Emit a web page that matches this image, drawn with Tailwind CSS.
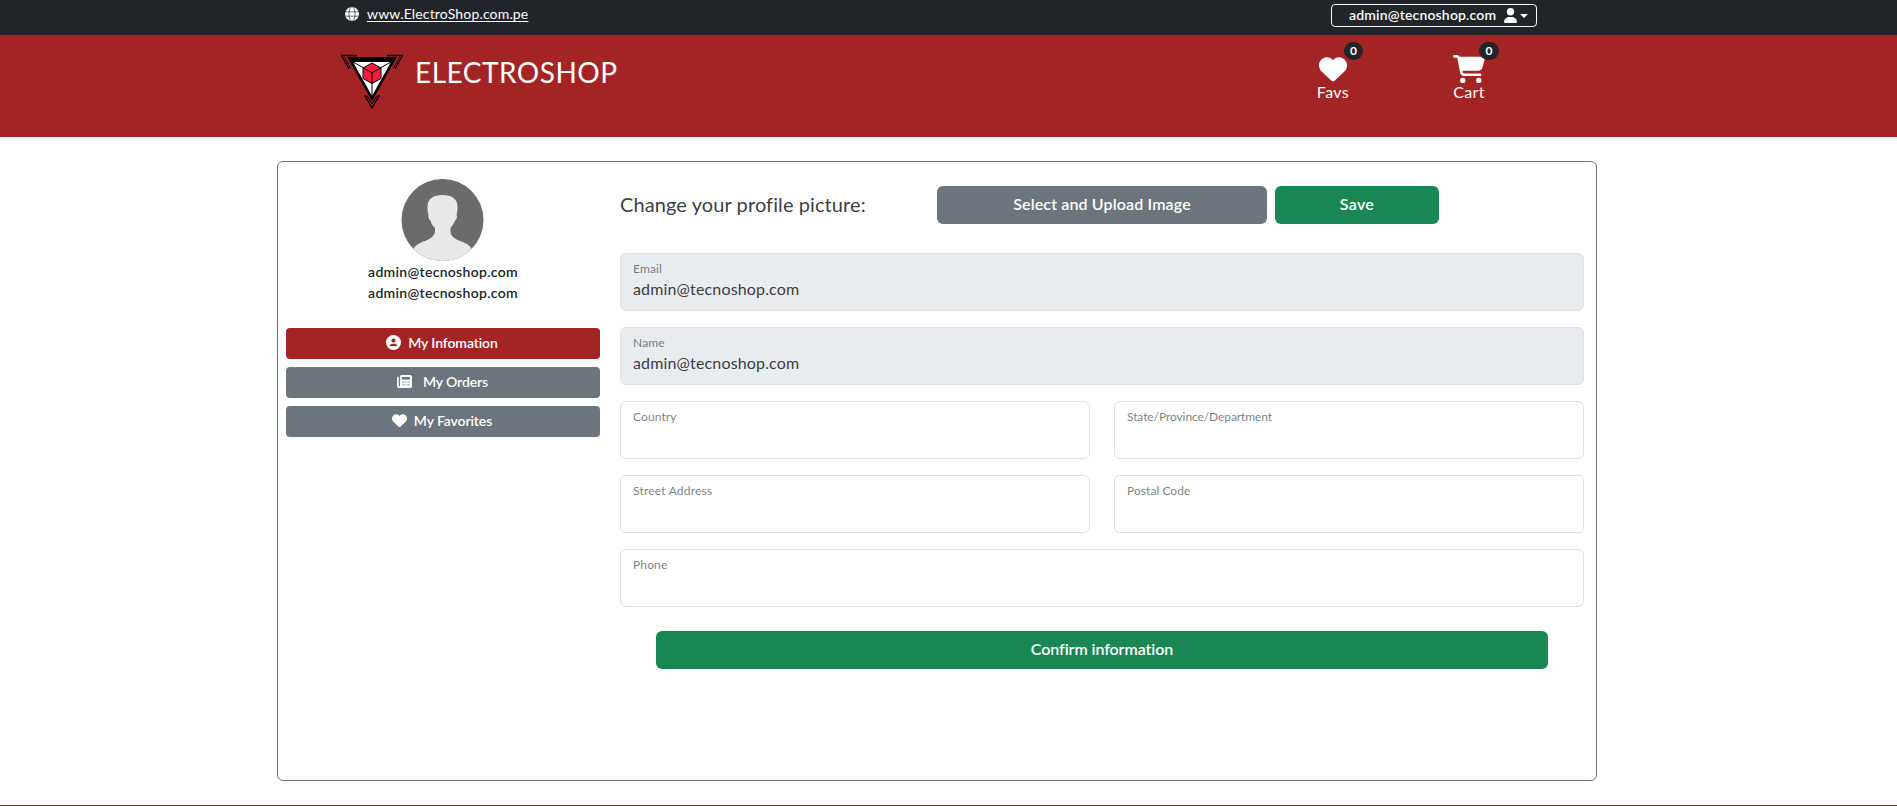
<!DOCTYPE html>
<html lang="en">
<head>
<meta charset="utf-8">
<title>ElectroShop</title>
<script src="https://cdn.jsdelivr.net/npm/@tailwindcss/browser@4"></script>
</head>
<body class="h-[806px] overflow-hidden bg-white font-['Lato',sans-serif] text-base text-[#212529]">

<!-- Top bar -->
<div class="flex h-[35px] items-start justify-between bg-[#212529] pr-[360px] pl-[345px] text-white">
  <div class="flex items-center pt-[3px]">
    <svg class="size-[14px]" viewBox="0 0 512 512" fill="#fff"><circle cx="256" cy="256" r="256"/><g fill="none" stroke="#212529" stroke-width="24"><path d="M0 176H512M0 336H512"/><ellipse cx="256" cy="256" rx="112" ry="270"/></g></svg>
    <a class="ml-2 text-sm leading-[21px] tracking-[0.16px] underline underline-offset-2">www.ElectroShop.com.pe</a>
  </div>
  <button class="mt-1 flex h-[23px] w-[206px] items-center rounded border border-[#f8f9fa] pl-[17px] text-[#f8f9fa]">
    <span class="pb-0.5 text-sm leading-[21px] font-semibold tracking-[0.17px]">admin@tecnoshop.com</span>
    <svg class="ml-2 h-[15px] w-[13px]" viewBox="0 0 448 512" fill="currentColor"><path d="M224 256A128 128 0 1 0 224 0a128 128 0 1 0 0 256zm-45.700 48C79.800 304 0 383.800 0 482.300C0 498.700 13.300 512 29.700 512H418.300c16.400 0 29.700-13.300 29.700-29.700C448 383.800 368.200 304 269.700 304H178.300z"/></svg>
    <svg class="ml-[3px] h-1 w-2" viewBox="0 0 8 4" preserveAspectRatio="none" fill="currentColor"><path d="M0 0H8L4 4Z"/></svg>
  </button>
</div>

<!-- Brand bar -->
<header class="flex h-[102px] items-start justify-between bg-[#a42324] pr-[404px] pl-[340px] text-white">
  <div class="flex items-start pt-[19px]">
    <svg class="h-[56px] w-[64px]" viewBox="0 0 64 56">
      <path d="M7 3H57L32 47Z" fill="#000"/>
      <path d="M17 1.500H1.500L9 15M47 1.500H62.500L55 15M24.500 41L32 54L39.500 41" fill="none" stroke="#000" stroke-width="1.300"/>
      <path d="M4.500 3.500L10.500 14M59.500 3.500L53.500 14M27 41.500L32 50L37 41.500" fill="none" stroke="#000" stroke-width="1"/>
      <path d="M13 8H51L32 42Z" fill="#fff"/>
      <path d="M13 8L24 14M51 8L40 14M32 29V42" stroke="#000" stroke-width="1"/>
      <path d="M32 9L41 14V24.500L32 29.500L23 24.500V14Z" fill="#fa1a3f" stroke="#000" stroke-width="1"/>
      <path d="M23 14L32 18.500L41 14M32 18.500V29" fill="none" stroke="#000" stroke-width="1"/>
    </svg>
    <span class="mt-px ml-[11px] text-[28px] leading-[34px] tracking-[0.5px]">ELECTROSHOP</span>
  </div>
  <nav class="flex gap-[88px] pt-5">
    <a class="relative flex w-12 flex-col items-center">
      <svg class="h-7 w-7" viewBox="0 0 512 512" fill="#fff"><path d="M47.600 300.400L228.300 469.100c7.500 7 17.400 10.900 27.700 10.900s20.200-3.900 27.700-10.900L464.400 300.400c30.400-28.300 47.600-68 47.600-109.500v-5.800c0-69.900-50.500-129.500-119.400-141C347 36.500 300.600 51.400 268 84L256 96 244 84c-32.600-32.600-79-47.500-124.600-39.900C50.500 55.600 0 115.200 0 185.100v5.800c0 41.500 17.200 81.200 47.600 109.500z"/></svg>
      <span class="-mt-[3px] leading-6 tracking-[0.4px]">Favs</span>
      <span class="absolute -top-[13px] left-[35px] flex h-[18px] w-[19px] items-center justify-center rounded-full bg-[#212529] pb-px text-xs leading-3 font-bold">0</span>
    </a>
    <a class="relative flex w-12 flex-col items-center">
      <svg class="h-7 w-8" viewBox="0 0 576 512" preserveAspectRatio="none" fill="#fff"><path d="M0 24C0 10.700 10.700 0 24 0H69.500c22 0 41.500 12.800 50.600 32h411c26.300 0 45.500 25 38.600 50.400l-41 152.300c-8.500 31.400-37 53.300-69.500 53.300H170.700l5.400 28.500c2.200 11.300 12.100 19.500 23.600 19.500H488c13.300 0 24 10.700 24 24s-10.700 24-24 24H199.700c-34.600 0-64.300-24.600-70.700-58.500L77.400 54.500c-.7-3.800-4-6.500-7.900-6.500H24C10.700 48 0 37.300 0 24zM128 464a48 48 0 1 1 96 0 48 48 0 1 1 -96 0zm336-48a48 48 0 1 1 0 96 48 48 0 1 1 0-96z"/></svg>
      <span class="-mt-[3px] leading-6 tracking-[0.3px]">Cart</span>
      <span class="absolute -top-[13px] left-[34px] flex h-[18px] w-5 items-center justify-center rounded-full bg-[#212529] pb-px text-xs leading-3 font-bold">0</span>
    </a>
  </nav>
</header>

<!-- Profile card -->
<main class="mt-6 ml-[277px] flex h-[620px] w-[1320px] items-start rounded-md border border-[#6c757d]">
  <aside class="ml-2 w-[314px] pt-4">
    <div class="flex flex-col items-center text-sm leading-[21px] font-semibold tracking-[0.3px]">
      <svg class="h-[83px] w-[84px]" viewBox="0 0 84 83">
        <defs><clipPath id="face"><circle cx="41.500" cy="42" r="41"/></clipPath></defs>
        <circle cx="41.500" cy="42" r="41" fill="#6b6b6b"/>
        <path clip-path="url(#face)" fill="#e8e8e8" d="M41.500 17C51 17 57 21 56.500 30C56.500 33 56 35 55.500 37C56.500 38 55.500 42 54 42.500C53 46 51 48 49.500 50V54C50 60 57 62 63 64.500C68 66.500 71 70 72 74V84H11V74C12 70 15 66.500 20 64.500C26 62 33 60 34 54V50C32 48 30 46 29.500 42.500C27.500 42 27 38 27.500 37C27 35 26.500 33 26.500 30C26 21 32 17 41.500 17Z"/>
      </svg>
      <span>admin@tecnoshop.com</span>
      <span>admin@tecnoshop.com</span>
    </div>
    <div class="mt-[25px] flex flex-col gap-2 text-sm leading-[21px] font-semibold tracking-[-0.1px] text-white">
      <button class="flex h-[31px] items-center justify-center rounded bg-[#a42324] pr-0.5 pb-0.5">
        <svg class="mr-[7px] size-[15px]" viewBox="0 0 16 16"><circle cx="8" cy="8" r="8" fill="#fff"/><circle cx="8" cy="5.800" r="2.200" fill="#a42324"/><path d="M3.800 11.800C4.400 10 5.500 9.200 7 9.200H9C10.500 9.200 11.600 10 12.200 11.800Z" fill="#a42324"/></svg>My Infomation
      </button>
      <button class="flex h-[31px] items-center justify-center rounded bg-[#6c757d] pr-px pb-0.5">
        <svg class="mr-[11px] size-[15px]" viewBox="0 0 512 512"><path fill="#fff" d="M96 96c0-35 29-64 64-64H448c35 0 64 29 64 64V416c0 35-29 64-64 64H80c-44 0-80-36-80-80V128c0-18 14-32 32-32s32 14 32 32V400c0 9 7 16 16 16s16-7 16-16Z"/><path fill="none" stroke="#6c757d" stroke-width="30" d="M80 110V420"/><path fill="#6c757d" d="M170 100H440V190H170Z"/><path stroke="#6c757d" stroke-width="22" d="M170 275H290M325 275H440M170 370H290M325 370H440"/></svg>My Orders
      </button>
      <button class="flex h-[31px] items-center justify-center rounded bg-[#6c757d] pr-0.5 pb-0.5">
        <svg class="mr-[7px] size-[15px]" viewBox="0 0 512 512" fill="#fff"><path d="M47.600 300.400L228.300 469.100c7.500 7 17.400 10.900 27.700 10.900s20.200-3.900 27.700-10.900L464.400 300.400c30.400-28.300 47.600-68 47.600-109.500v-5.800c0-69.900-50.500-129.500-119.400-141C347 36.500 300.600 51.400 268 84L256 96 244 84c-32.600-32.600-79-47.500-124.600-39.900C50.500 55.600 0 115.200 0 185.100v5.800c0 41.500 17.200 81.200 47.600 109.500z"/></svg>My Favorites
      </button>
    </div>
  </aside>

  <section class="ml-5 w-[964px] pt-6">
    <div class="flex h-[38px] items-center font-semibold text-white">
      <span class="w-[317px] pb-[3px] text-xl leading-6 font-normal tracking-[0.09px] text-[#212529]/90">Change your profile picture:</span>
      <button class="h-[38px] w-[330px] rounded-md bg-[#6c757d] pb-0.5 tracking-[0.14px]">Select and Upload Image</button>
      <button class="ml-2 h-[38px] w-[164px] rounded-md bg-[#198754] pb-0.5 tracking-[0.3px]">Save</button>
    </div>
    <form class="mt-[29px] grid grid-cols-2 gap-x-6 gap-y-4">
      <div class="col-span-2 flex h-[58px] flex-col rounded-md border border-[#dee2e6] bg-[#e9ecef] px-3 pt-[7px]">
        <label class="text-xs leading-4 tracking-[0.15px] text-[#212529]/60">Email</label>
        <span class="leading-6 tracking-[0.15px] text-[#212529]/90">admin@tecnoshop.com</span>
      </div>
      <div class="col-span-2 flex h-[58px] flex-col rounded-md border border-[#dee2e6] bg-[#e9ecef] px-3 pt-[7px]">
        <label class="text-xs leading-4 tracking-[0.15px] text-[#212529]/60">Name</label>
        <span class="leading-6 tracking-[0.15px] text-[#212529]/90">admin@tecnoshop.com</span>
      </div>
      <div class="h-[58px] rounded-md border border-[#dee2e6] px-3 pt-[7px] text-xs leading-4 tracking-[0.1px] text-[#212529]/60">Country</div>
      <div class="h-[58px] rounded-md border border-[#dee2e6] px-3 pt-[7px] text-xs leading-4 tracking-[-0.09px] text-[#212529]/60">State/Province/Department</div>
      <div class="h-[58px] rounded-md border border-[#dee2e6] px-3 pt-[7px] text-xs leading-4 tracking-[0.2px] text-[#212529]/60">Street Address</div>
      <div class="h-[58px] rounded-md border border-[#dee2e6] px-3 pt-[7px] text-xs leading-4 tracking-[0.05px] text-[#212529]/60">Postal Code</div>
      <div class="col-span-2 h-[58px] rounded-md border border-[#dee2e6] px-3 pt-[7px] text-xs leading-4 tracking-[0.15px] text-[#212529]/60">Phone</div>
    </form>
    <button class="mx-9 mt-6 block h-[38px] w-[892px] rounded-md bg-[#198754] pb-0.5 font-semibold tracking-[-0.07px] text-white">Confirm information</button>
  </section>
</main>

<footer class="mt-6 h-px bg-[#a42324]"></footer>
</body>
</html>
